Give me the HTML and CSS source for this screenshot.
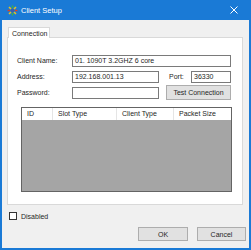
FILE: index.html
```html
<!DOCTYPE html>
<html>
<head>
<meta charset="utf-8">
<link rel="stylesheet" href="styles.css">
</head>
<body>
<div class="window">
  <div class="titlebar">
    <svg class="app-icon" width="11" height="11" viewBox="0 0 11 11">
      <circle cx="5.5" cy="5.5" r="2" fill="#3a5fb0"/>
      <path d="M2 2 L4 4 M9 2 L7 4 M2 9 L4 7 M9 9 L7 7" stroke="#e6c020" stroke-width="1.6"/>
      <path d="M5.5 0.5 V3 M5.5 8 V10.5" stroke="#3cb04a" stroke-width="1.6"/>
      <path d="M0.5 5.5 H3 M8 5.5 H10.5" stroke="#d8402a" stroke-width="1.6"/>
    </svg>
    <span class="title">Client Setup</span>
    <svg class="close" width="8" height="8" viewBox="0 0 8 8"><path d="M0.5 0.5 L7.5 7.5 M7.5 0.5 L0.5 7.5" stroke="#fff" stroke-width="1"/></svg>
  </div>
  <div class="client">
    <div class="tabs"><div class="tab">Connection</div></div>
    <div class="panel">
      <div class="row">
        <span class="label">Client Name:</span>
        <div class="input wide">01. 1090T 3.2GHZ 6 core</div>
      </div>
      <div class="row">
        <span class="label">Address:</span>
        <div class="input mid">192.168.001.13</div>
        <span class="port-label">Port:</span>
        <div class="input port">36330</div>
      </div>
      <div class="row">
        <span class="label">Password:</span>
        <div class="input mid"></div>
        <div class="btn test">Test Connection</div>
      </div>
      <div class="list">
        <div class="list-head">
          <div class="col c-id">ID</div>
          <div class="col c-slot">Slot Type</div>
          <div class="col c-client">Client Type</div>
          <div class="col c-pkt">Packet Size</div>
        </div>
        <div class="list-body"></div>
      </div>
    </div>
    <div class="check-row">
      <span class="checkbox"></span>
      <span class="check-label">Disabled</span>
    </div>
    <div class="buttons">
      <div class="btn ok">OK</div>
      <div class="btn cancel">Cancel</div>
    </div>
  </div>
</div>
</body>
</html>
```
FILE: styles.css
```css
html, body {
  margin: 0;
  padding: 0;
  background: #ffffff;
}
body {
  font-family: "Liberation Sans", Arial, sans-serif;
  font-size: 7px;
  color: #262626;
}
.window {
  width: 251px;
  height: 250px;
  box-sizing: border-box;
  background: #1a7ad6;
  display: flex;
  flex-direction: column;
  padding: 0 2px 2px 2px;
}
.titlebar {
  height: 20px;
  display: flex;
  align-items: center;
  margin: 0 -2px;
  padding-left: 7px;
  padding-right: 13px;
  color: #fff;
}
.app-icon {
  flex: none;
}
.title {
  margin-left: 3px;
  font-size: 7.5px;
  flex: 1;
}
.close {
  flex: none;
}
.client {
  flex: 1;
  background: #f0f0f0;
  display: flex;
  flex-direction: column;
  padding: 7px 0 0 5px;
}
.tabs {
  display: flex;
  padding-left: 1px;
  height: 11px;
  position: relative;
  z-index: 1;
}
.tab {
  background: #ffffff;
  border: 1px solid #d9d9d9;
  border-bottom: none;
  height: 11px;
  box-sizing: border-box;
  padding: 1px 4px 0 3px;
  line-height: 9px;
  width: 42px;
}
.panel {
  width: 236px;
  height: 168px;
  box-sizing: border-box;
  background: #ffffff;
  border: 1px solid #d9d9d9;
  margin-top: -1px;
  padding: 16px 0 0 9px;
  display: flex;
  flex-direction: column;
}
.row {
  display: flex;
  align-items: center;
  height: 13px;
  margin-bottom: 3px;
}
.label {
  width: 55px;
  flex: none;
}
.input {
  height: 12px;
  box-sizing: border-box;
  border: 1px solid #7a7a7a;
  background: #fff;
  padding-left: 2px;
  line-height: 10px;
  white-space: nowrap;
  overflow: hidden;
}
.wide { width: 159px; }
.mid { width: 87px; }
.port-label {
  margin-left: 10px;
  width: 22px;
}
.port { width: 40px; }
.btn {
  box-sizing: border-box;
  border: 1px solid #adadad;
  background: #e1e1e1;
  display: flex;
  align-items: center;
  justify-content: center;
}
.test {
  margin-left: 7px;
  width: 65px;
  height: 15px;
}
.list {
  margin-top: 5px;
  margin-left: 4px;
  width: 211px;
  height: 85px;
  box-sizing: border-box;
  border: 1px solid #646464;
  display: flex;
  flex-direction: column;
}
.list-head {
  height: 12px;
  background: #fff;
  display: flex;
  flex: none;
}
.col {
  border-right: 1px solid #e5e5e5;
  padding-left: 5px;
  line-height: 12px;
  box-sizing: border-box;
}
.c-id { width: 31px; }
.c-slot { width: 64px; }
.c-client { width: 57px; }
.c-pkt { border-right: none; flex: 1; }
.list-body {
  flex: 1;
  background: #a5a5a5;
}
.check-row {
  display: flex;
  align-items: center;
  margin-top: 7px;
  padding-left: 2px;
}
.checkbox {
  width: 8px;
  height: 8px;
  box-sizing: border-box;
  border: 1px solid #333;
  background: #fff;
}
.check-label {
  margin-left: 4px;
}
.buttons {
  display: flex;
  justify-content: flex-end;
  gap: 9px;
  margin-top: 7px;
  padding-right: 3px;
}
.ok { width: 50px; height: 14px; }
.cancel { width: 49px; height: 14px; }
```
